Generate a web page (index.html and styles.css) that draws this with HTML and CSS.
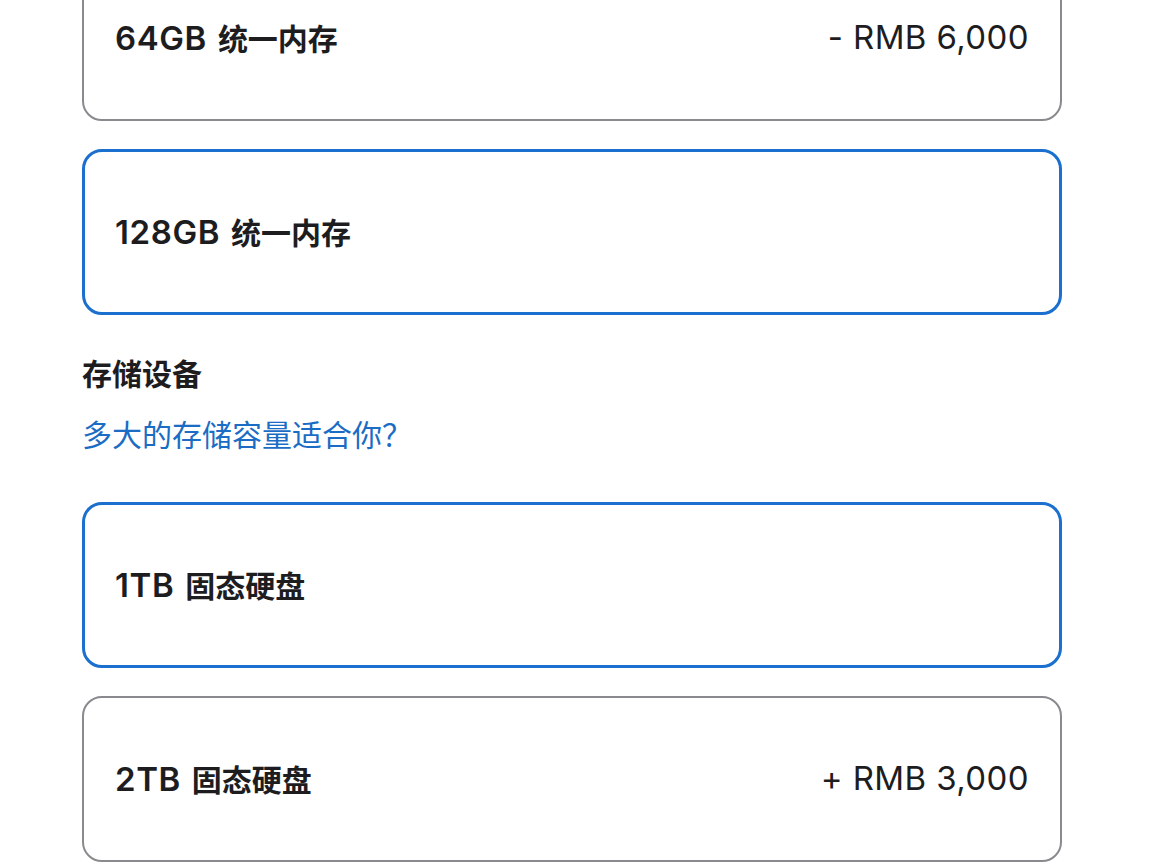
FILE: index.html
```html
<!DOCTYPE html>
<html lang="zh-CN">
<head>
<meta charset="utf-8">
<title>配置</title>
<link rel="stylesheet" href="styles.css">
</head>
<body>
<main class="config">
  <div class="option-list">
    <div class="option">
      <span class="option-name">64GB <span class="cjk">统一内存</span></span>
      <span class="option-price">- RMB 6,000</span>
    </div>
    <div class="option selected">
      <span class="option-name">128GB <span class="cjk">统一内存</span></span>
    </div>
  </div>

  <section class="group">
    <h2 class="group-title">存储设备</h2>
    <a class="group-link" href="#">多大的存储容量适合你？</a>
  </section>

  <div class="option-list">
    <div class="option selected">
      <span class="option-name">1TB <span class="cjk">固态硬盘</span></span>
    </div>
    <div class="option">
      <span class="option-name">2TB <span class="cjk">固态硬盘</span></span>
      <span class="option-price">+ RMB 3,000</span>
    </div>
  </div>
</main>
</body>
</html>
```

FILE: styles.css
```css
html, body {
  margin: 0;
  padding: 0;
  background: #ffffff;
}

body {
  font-family: Inter, "Noto Sans CJK SC", sans-serif;
  color: #1d1d1f;
  overflow: hidden;
}

.config {
  width: 980px;
  margin-left: 82px;
  margin-top: -45px;
}

.option-list {
  display: flex;
  flex-direction: column;
  gap: 28px;
}

.option {
  box-sizing: border-box;
  height: 166px;
  border: 2px solid #8a8a8e;
  border-radius: 20px;
  padding: 0 31px 3px;
  display: flex;
  align-items: center;
  justify-content: space-between;
  font-size: 33px;
}

.option.selected {
  border: 3px solid #1a6fcf;
  padding: 0 30px 3px;
}

.option-name {
  font-weight: 600;
  letter-spacing: 0.6px;
  word-spacing: 2px;
}

.cjk {
  font-family: "Noto Sans CJK SC", sans-serif;
  font-size: 30px;
  font-weight: 600;
  letter-spacing: 0;
}

.option-price {
  font-weight: 400;
  letter-spacing: 0.4px;
}

.group {
  display: flex;
  flex-direction: column;
  gap: 25px;
  padding-top: 39px;
  padding-bottom: 51px;
}

.group-title {
  margin: 0;
  font-family: "Noto Sans CJK SC", sans-serif;
  font-size: 30px;
  line-height: 36px;
  font-weight: 600;
}

.group-link {
  font-family: "Noto Sans CJK SC", sans-serif;
  font-size: 30px;
  line-height: 36px;
  color: #1b6cc4;
  text-decoration: none;
}
```
